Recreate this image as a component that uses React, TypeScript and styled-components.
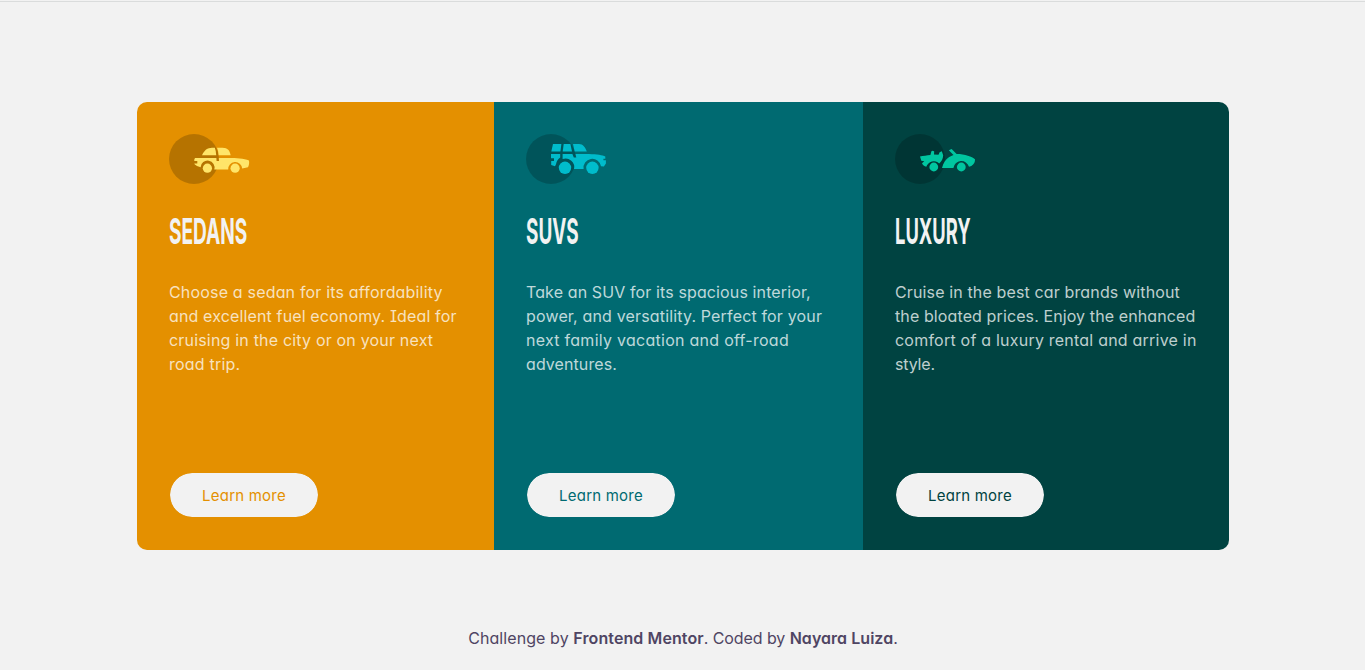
import React from 'react';
import styled, { createGlobalStyle } from 'styled-components';

const GlobalStyle = createGlobalStyle`
  * { box-sizing: border-box; margin: 0; padding: 0; }
  body {
    background: #f2f2f2;
    font-family: Inter, "Open Sans", sans-serif;
    font-size: 16px;
    font-feature-settings: "cv11", "cv08";
    overflow: hidden;
  }
`;

const Page = styled.div`
  height: 670px;
  display: flex;
  flex-direction: column;
  align-items: center;
`;

const TopRule = styled.div`
  width: 100%;
  height: 2px;
  flex: none;
  border-bottom: 1px solid #dadcdc;
`;

const Cards = styled.main`
  display: grid;
  grid-template-columns: 357px 369px 366px;
  width: 1092px;
  height: 448px;
  margin: 100px 0 0 1px;
  border-radius: 10px;
  overflow: hidden;
`;

const Card = styled.section<{ $color: string }>`
  display: flex;
  flex-direction: column;
  align-items: flex-start;
  padding: 32px;
  background: ${p => p.$color};
`;

const CarIcon = styled.svg`
  display: block;
  flex: none;
  width: 81px;
  height: 50px;
`;

const Title = styled.h2<{ $stretch: number }>`
  margin: 23px 0 25px;
  font-size: 36px;
  font-weight: 700;
  line-height: 48px;
  color: #f2f2f2;
  text-transform: uppercase;
  transform: scaleX(${p => p.$stretch});
  transform-origin: left center;
`;

const Description = styled.p`
  line-height: 24px;
  color: rgba(255, 255, 255, 0.75);
`;

const Line = styled.span<{ $spacing: number }>`
  display: block;
  white-space: nowrap;
  letter-spacing: ${p => p.$spacing}px;
`;

const LearnMore = styled.button<{ $color: string }>`
  width: 150px;
  height: 46px;
  margin-top: auto;
  border: 1px solid ${p => p.$color};
  border-radius: 25px;
  background: #f2f2f2;
  background-clip: padding-box;
  color: ${p => p.$color};
  font: 400 15px Inter, "Open Sans", sans-serif;
  font-feature-settings: "cv11";
  letter-spacing: 0.22px;
`;

const Footer = styled.footer`
  margin: 76px 0 0 1px;
  line-height: 24px;
  color: #4f4563;
  white-space: pre;
`;

const Plain = styled.span<{ $spacing: number }>`
  letter-spacing: ${p => p.$spacing}px;
`;

const Strong = styled.strong<{ $spacing: number }>`
  font-weight: 600;
  letter-spacing: ${p => p.$spacing}px;
`;

function SedanArt() {
  return (
    <g fill="#ffe569">
      <path d="M33 21.3C35.2 16 38.5 13.8 43 13.7H45.8Q47 16.5 47.2 21.3Z" />
      <path d="M48 13.7H53.5C58.8 13.7 60.8 16.5 61.7 21.3H49.6Q49.5 17 48 13.7Z" />
      <path d="M26 24H47.4L47.6 27H50L49.8 24H60C67 24 75 24.3 80 26.4C80.4 29 80 31.3 79 33.2L73.2 34.5A7 7 0 1 0 59.2 35.6H45.3A7 7 0 1 0 31.6 33.2L28 32C26.4 31.3 25.6 30.5 25.3 29.6H28.3V27H25.3V25.4Z" />
      <circle cx="38.4" cy="34.2" r="4.6" />
      <circle cx="66.1" cy="34.2" r="4.6" />
    </g>
  );
}

function SuvArt() {
  return (
    <g fill="#00bccc">
      <path d="M27 10H35.4L34.4 17.5H25.3Z" />
      <path d="M37.7 10H44.4L46 17.5H36.7Z" />
      <path d="M47 10H53C57 10 59.2 13.2 60.8 17.5H48.7Z" />
      <path d="M25 20H34.2V23.6C32 25 30.6 27.2 30 30.2L29 32.3L25.2 31V27H28V24.3H25Z" />
      <path d="M36.6 20H46.4L47.8 23.5H50.3L49.5 20H63C71 20.4 76.5 21 79.3 22.6V24.8H77.4V26.3H79.9V29.6L77.9 32.5L75 32.2A8.8 8.8 0 0 0 57.6 35.1H48A8.7 8.7 0 0 0 36.6 25Z" />
      <circle cx="39" cy="33.8" r="6.2" />
      <circle cx="66.4" cy="33.8" r="6.2" />
    </g>
  );
}

function LuxuryArt() {
  return (
    <g fill="#00c6a0">
      <path d="M25 22.6C28 22 32 21.2 35.4 21L36.4 17.2Q37.8 16.2 39.2 17.5L39 20.6L43.5 20.8L44.6 18.2L46.8 17.2L48.2 21.2C48 24.7 46.6 27.4 44.2 29.4A8 8 0 0 0 31.3 32.7C29.3 32.4 27.7 30.8 27 29.2L29.3 27.3L26.3 26.7Z" />
      <path d="M47 34C48.2 29.2 50.6 25 54.2 23L58.5 21L53.8 16.2L56.6 15L61.6 20C70 20 77 22.7 80 25.3C80.1 28 79.2 30.2 76.3 32L74 32.7A8 8 0 0 0 58.4 34Z" />
      <circle cx="38.8" cy="33" r="4.4" />
      <circle cx="66.3" cy="33" r="4.4" />
    </g>
  );
}

type CarClass = {
  name: string;
  color: string;
  stretch: number;
  art: React.ReactNode;
  lines: [string, number][];
};

const classes: CarClass[] = [
  {
    name: 'Sedans', color: '#e49000', stretch: 0.53, art: <SedanArt />,
    lines: [
      ['Choose a sedan for its affordability', 0.18],
      ['and excellent fuel economy. Ideal for', 0.14],
      ['cruising in the city or on your next', 0.185],
      ['road trip.', 0.22],
    ],
  },
  {
    name: 'SUVs', color: '#006a71', stretch: 0.525, art: <SuvArt />,
    lines: [
      ['Take an SUV for its spacious interior,', 0.12],
      ['power, and versatility. Perfect for your', 0.16],
      ['next family vacation and off-road', 0.27],
      ['adventures.', 0.08],
    ],
  },
  {
    name: 'Luxury', color: '#004341', stretch: 0.51, art: <LuxuryArt />,
    lines: [
      ['Cruise in the best car brands without', 0.135],
      ['the bloated prices. Enjoy the enhanced', 0.11],
      ['comfort of a luxury rental and arrive in', 0.22],
      ['style.', -0.15],
    ],
  },
];

export default function App() {
  return (
    <Page>
      <GlobalStyle />
      <TopRule />
      <Cards>
        {classes.map(c => (
          <Card key={c.name} $color={c.color}>
            <CarIcon viewBox="0 0 81 50" aria-hidden="true">
              <circle cx="25" cy="25" r="25" fill="#000" fillOpacity="0.2" />
              {c.art}
            </CarIcon>
            <Title $stretch={c.stretch}>{c.name}</Title>
            <Description>
              {c.lines.map(([text, spacing]) => (
                <Line key={text} $spacing={spacing}>{text}</Line>
              ))}
            </Description>
            <LearnMore $color={c.color}>Learn more</LearnMore>
          </Card>
        ))}
      </Cards>
      <Footer>
        <Plain $spacing={0.08}>{'Challenge by '}</Plain>
        <Strong $spacing={0.1}>Frontend Mentor</Strong>
        <Plain $spacing={-0.08}>{'. Coded by '}</Plain>
        <Strong $spacing={0.04}>Nayara Luiza</Strong>
        <Plain $spacing={0}>.</Plain>
      </Footer>
    </Page>
  );
}
